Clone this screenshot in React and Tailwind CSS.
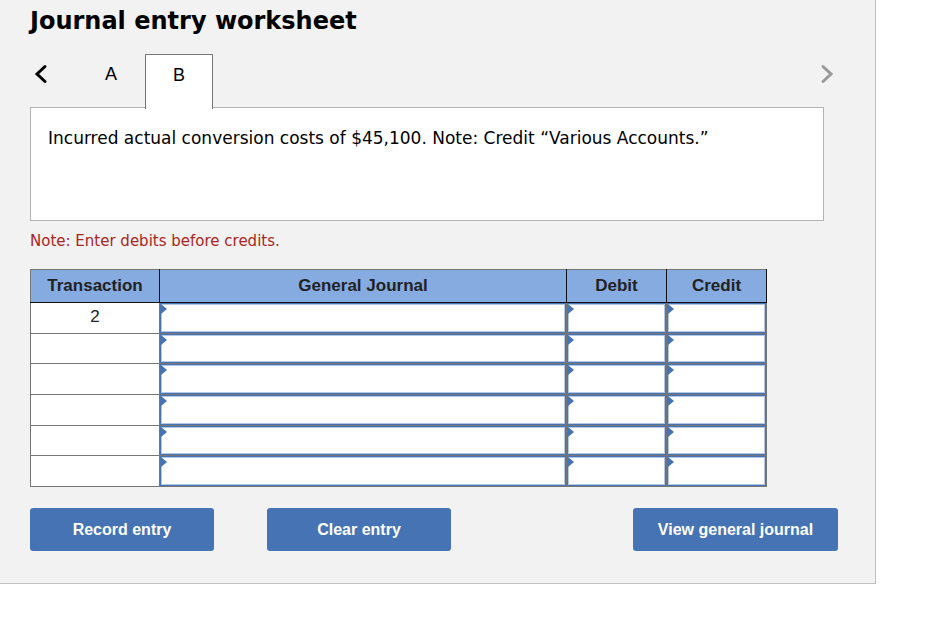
const rows = ["2", "", "", "", "", ""];
const fields = ["General Journal", "Debit", "Credit"];

function Chevron({ d, color }) {
  return (
    <svg width="14" height="20" viewBox="0 0 14 20" fill="none" stroke={color} strokeWidth="3" strokeLinecap="round" strokeLinejoin="miter" aria-hidden="true">
      <path d={d} />
    </svg>
  );
}

function EntryCell({ label }) {
  return (
    <td className="h-[30px] border border-[#777777] p-0">
      <div className="relative h-full">
        <input
          type="text"
          aria-label={label}
          className="block h-full w-full border border-[#4673b4] bg-white px-2 text-base shadow-[inset_0_0_0_1px_#b4c8e6] outline-none"
        />
        <svg className="pointer-events-none absolute top-px left-px" width="6" height="10" viewBox="0 0 6 10" fill="#4673b4" aria-hidden="true">
          <path d="M0 0L6 5L0 10Z" />
        </svg>
      </div>
    </td>
  );
}

function HeadCell({ children }) {
  return (
    <th scope="col" className="h-[33px] border border-t-[#777777] border-r-[#111111] border-b-[#111111] border-l-[#111111] p-0 pb-px text-center font-bold first:border-l-[#777777]">
      {children}
    </th>
  );
}

function ActionButton({ width, children }) {
  return (
    <button type="button" className={`h-[43px] rounded-[3px] bg-[#4673b4] text-base font-bold text-white ${width}`}>
      {children}
    </button>
  );
}

export default function App() {
  return (
    <main className="min-h-screen bg-white pr-[68px] font-['Liberation_Sans',Arial,sans-serif] text-black">
      <section className="border-r border-b border-[#c0c0c0] bg-[#f2f2f2] pt-[5px] pr-[37px] pb-8 pl-[30px]">
        <h1 className="font-['DejaVu_Sans',Verdana,sans-serif] text-2xl leading-8 font-bold">Journal entry worksheet</h1>

        <nav className="mt-[17px] mr-1 flex h-[53px] items-start" aria-label="Transactions">
          <button type="button" aria-label="Previous" className="flex h-10 w-[47px] items-center pl-1">
            <Chevron d="M11 2.5L3 10L11 17.5" color="#000000" />
          </button>
          <button type="button" className="h-10 w-[68px] text-lg">A</button>
          <button type="button" aria-current="true" className="relative h-[55px] w-[68px] border border-b-0 border-[#777777] bg-white pb-[14px] text-lg">
            B
          </button>
          <button type="button" aria-label="Next" className="ml-auto flex h-10 items-center">
            <Chevron d="M3 2.5L11 10L3 17.5" color="#999999" />
          </button>
        </nav>

        <div className="mr-[14px] min-h-[114px] border border-[#b3b3b3] bg-white px-[17px] py-[18px]">
          <p className="font-['DejaVu_Sans',Verdana,sans-serif] text-[17px] leading-6">
            Incurred actual conversion costs of $45,100. Note: Credit “Various Accounts.”
          </p>
        </div>

        <p className="mt-2 font-['DejaVu_Sans',Verdana,sans-serif] text-[15px] leading-6 text-[#aa2622]">Note: Enter debits before credits.</p>

        <div className="mt-4 mr-[71px]">
          <table className="h-[218px] w-full table-fixed border-collapse bg-white text-[17px] leading-5 text-[#222222]">
            <colgroup>
              <col className="w-[129px]" />
              <col />
              <col className="w-[100px]" />
              <col className="w-[100px]" />
            </colgroup>
            <thead className="bg-[#85abe0]">
              <tr>
                <HeadCell>Transaction</HeadCell>
                {fields.map((field) => (
                  <HeadCell key={field}>{field}</HeadCell>
                ))}
              </tr>
            </thead>
            <tbody>
              {rows.map((transaction, i) => (
                <tr key={i}>
                  <td className="h-[30px] border border-[#777777] p-0 pb-px text-center">{transaction}</td>
                  {fields.map((field) => (
                    <EntryCell key={field} label={`${field}, line ${i + 1}`} />
                  ))}
                </tr>
              ))}
            </tbody>
          </table>
        </div>

        <div className="mt-[21px] flex">
          <ActionButton width="w-[184px]">Record entry</ActionButton>
          <ActionButton width="ml-[53px] w-[184px]">Clear entry</ActionButton>
          <ActionButton width="ml-auto w-[205px]">View general journal</ActionButton>
        </div>
      </section>
    </main>
  );
}
